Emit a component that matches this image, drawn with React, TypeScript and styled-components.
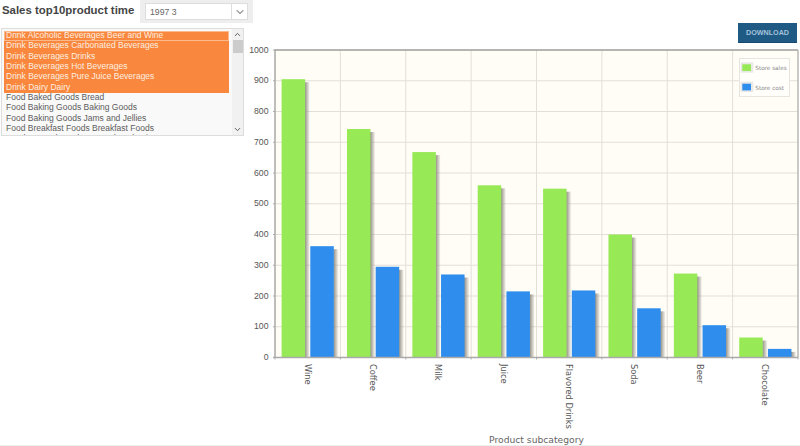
import React from 'react'
import styled, { createGlobalStyle } from 'styled-components'
import { ChevronDown, ChevronUp } from 'lucide-react'

const GlobalStyle = createGlobalStyle`
  html, body {
    margin: 0;
    padding: 0;
    background: #fff;
  }
`

const Page = styled.div`
  width: 800px;
  height: 446px;
  overflow: hidden;
  display: flex;
  box-sizing: border-box;
  border-bottom: 1px solid #eee;
  font-family: 'Liberation Sans', Arial, sans-serif;
`

const Side = styled.div`
  width: 246px;
  flex: none;
  box-sizing: border-box;
  padding-left: 1px;
  display: flex;
  flex-direction: column;
`

const TitleRow = styled.div`
  height: 24px;
  display: flex;
  align-items: flex-start;
  padding-left: 1px;
`

const Title = styled.div`
  width: 138px;
  flex: none;
  font-size: 11.4px;
  font-weight: bold;
  color: #444;
  line-height: 20px;
  white-space: nowrap;
`

const SelectWrap = styled.div`
  width: 113px;
  height: 23px;
  flex: none;
  box-sizing: border-box;
  background: #eee;
  padding: 3px 5px;
`

const SelectBox = styled.div`
  height: 15px;
  background: #fff;
  border: 1px solid #ddd;
  display: flex;
  align-items: center;
  font-size: 8.7px;
  color: #666;
  padding-left: 4px;
`

const SelectText = styled.span`
  flex: 1;
`

const SelectArrow = styled.span`
  width: 15px;
  height: 100%;
  border-left: 1px solid #ddd;
  display: flex;
  align-items: center;
  justify-content: center;
  color: #999;
`

const ListBox = styled.div`
  margin-top: 4px;
  width: 243px;
  height: 108px;
  box-sizing: border-box;
  border: 1px solid #ddd;
  background: #f9f9f9;
  display: flex;
  overflow: hidden;
`

const Options = styled.div`
  flex: 1;
  padding: 2px 0 0 2px;
  overflow: hidden;
`

const Option = styled.div<{ $selected?: boolean; $focused?: boolean }>`
  height: 10.33px;
  line-height: 9px;
  width: 225px;
  font-size: 8.5px;
  padding-left: 2px;
  box-sizing: border-box;
  white-space: nowrap;
  color: ${p => (p.$selected ? '#fdeee0' : '#5c5c5c')};
  background: ${p => (p.$selected ? '#f9873d' : 'transparent')};
  outline: ${p => (p.$focused ? '1px solid #fbb98c' : 'none')};
  outline-offset: -1px;
`

const Scrollbar = styled.div`
  width: 11px;
  flex: none;
  background: #f1f1f1;
  display: flex;
  flex-direction: column;
  align-items: center;
  color: #555;
`

const ScrollButton = styled.div`
  height: 11px;
  flex: none;
  display: flex;
  align-items: center;
  justify-content: center;
`

const ScrollThumb = styled.div`
  width: 10px;
  height: 13px;
  background: #ccc;
`

const ScrollSpace = styled.div`
  flex: 1;
`

const Main = styled.div`
  flex: 1;
  position: relative;
`

const Download = styled.button`
  position: absolute;
  top: 23px;
  right: 3px;
  width: 59px;
  height: 20px;
  border: none;
  border-bottom: 1px solid #174a70;
  padding: 0;
  background: #1f5a85;
  color: #a3c2da;
  font-family: 'Liberation Sans', Arial, sans-serif;
  font-size: 7.2px;
  font-weight: bold;
  cursor: pointer;
`

const items = [
  'Drink Alcoholic Beverages Beer and Wine',
  'Drink Beverages Carbonated Beverages',
  'Drink Beverages Drinks',
  'Drink Beverages Hot Beverages',
  'Drink Beverages Pure Juice Beverages',
  'Drink Dairy Dairy',
  'Food Baked Goods Bread',
  'Food Baking Goods Baking Goods',
  'Food Baking Goods Jams and Jellies',
  'Food Breakfast Foods Breakfast Foods',
  'Food Canned Foods Canned Anchovies',
]

const data = [
  { name: 'Wine', sales: 905, cost: 362 },
  { name: 'Coffee', sales: 743, cost: 295 },
  { name: 'Milk', sales: 668, cost: 270 },
  { name: 'Juice', sales: 560, cost: 215 },
  { name: 'Flavored Drinks', sales: 549, cost: 218 },
  { name: 'Soda', sales: 400, cost: 160 },
  { name: 'Beer', sales: 273, cost: 105 },
  { name: 'Chocolate', sales: 65, cost: 28 },
]

// chart coords are page coords minus the 246px of the side column
const left = 29
const right = 552
const top = 50
const bottom = 357.5
const step = (right - left) / 8
const yOf = (v: number) => bottom - (v / 1000) * (bottom - top)

const Bar = ({ x, value, color }: { x: number; value: number; color: string }) => {
  const y = yOf(value)
  return (
    <>
      <rect x={x + 23} y={y + 3} width={5} height={bottom - y - 3} fill="url(#barShadow)" />
      <rect x={x} y={y} width={23.5} height={bottom - y} fill={color} />
    </>
  )
}

const Chart = () => (
  <svg width={554} height={445} style={{ display: 'block' }}>
    <defs>
      <linearGradient id="barShadow">
        <stop offset="0" stopColor="#8f8b82" />
        <stop offset="1" stopColor="#8f8b82" stopOpacity="0.08" />
      </linearGradient>
    </defs>
    <rect x={left} y={top} width={right - left} height={bottom - top} fill="#fffdf6" />
    {Array.from({ length: 10 }, (_, i) => (
      <line key={i} x1={left} x2={right} y1={yOf((i + 1) * 100)} y2={yOf((i + 1) * 100)} stroke="#e2dfd9" />
    ))}
    {Array.from({ length: 7 }, (_, i) => (
      <line key={i} x1={left + step * (i + 1)} x2={left + step * (i + 1)} y1={top} y2={bottom} stroke="#e2dfd9" />
    ))}
    {data.map((d, i) => (
      <g key={d.name}>
        <Bar x={left + step * i + 6.6} value={d.sales} color="#97e955" />
        <Bar x={left + step * i + 35.3} value={d.cost} color="#2e8ded" />
      </g>
    ))}
    <path d={`M${left} ${bottom}V${top}H${right}`} fill="none" stroke="#a3a3a0" strokeWidth={1.4} />
    <line x1={right} x2={right} y1={top} y2={bottom} stroke="#bdbcb8" strokeWidth={1.6} />
    <line x1={left - 2} x2={right} y1={bottom} y2={bottom} stroke="#aaa" strokeWidth={1.4} />
    {Array.from({ length: 11 }, (_, i) => (
      <g key={i}>
        <line x1={left - 2} x2={left} y1={yOf(i * 100)} y2={yOf(i * 100)} stroke="#aaa" />
        <text x={left - 6.5} y={yOf(i * 100) + 2.6} textAnchor="end" fontSize={8.7} fill="#555" fontFamily="'Liberation Sans', sans-serif">
          {i * 100}
        </text>
      </g>
    ))}
    {Array.from({ length: 9 }, (_, i) => (
      <line key={i} x1={left + step * i} x2={left + step * i} y1={bottom} y2={bottom + 2} stroke="#aaa" />
    ))}
    {data.map((d, i) => (
      <text
        key={d.name}
        transform={`translate(${left + step * i + 29.5} 364) rotate(90)`}
        fontSize={8.3}
        fill="#555"
        fontFamily="'DejaVu Sans', sans-serif"
      >
        {d.name}
      </text>
    ))}
    <text x={290.5} y={443} textAnchor="middle" fontSize={9.2} fill="#666" fontFamily="'DejaVu Sans', sans-serif">
      Product subcategory
    </text>
    <rect x={493.5} y={58.5} width={50} height={38} fill="#fffefb" stroke="#e6e5e0" />
    <rect x={494.7} y={62.3} width={12.6} height={10.4} fill="#e8e8e6" />
    <rect x={496.3} y={64.3} width={8.7} height={6.7} fill="#97e955" />
    <rect x={494.7} y={81.7} width={12.6} height={10.4} fill="#e8e8e6" />
    <rect x={496.3} y={83.7} width={8.7} height={6.7} fill="#2e8ded" />
    <text x={509.3} y={70.3} fontSize={5.7} fill="#888" fontFamily="'DejaVu Sans', sans-serif">Store sales</text>
    <text x={509.3} y={89.7} fontSize={5.7} fill="#888" fontFamily="'DejaVu Sans', sans-serif">Store cost</text>
  </svg>
)

const App = () => (
  <Page>
    <GlobalStyle />
    <Side>
      <TitleRow>
        <Title>Sales top10product time</Title>
        <SelectWrap>
          <SelectBox>
            <SelectText>1997 3</SelectText>
            <SelectArrow>
              <ChevronDown size={12} strokeWidth={2.2} />
            </SelectArrow>
          </SelectBox>
        </SelectWrap>
      </TitleRow>
      <ListBox>
        <Options>
          {items.map((t, i) => (
            <Option key={t} $selected={i < 6} $focused={i === 0}>
              {t}
            </Option>
          ))}
        </Options>
        <Scrollbar>
          <ScrollButton>
            <ChevronUp size={9} strokeWidth={2.5} />
          </ScrollButton>
          <ScrollThumb />
          <ScrollSpace />
          <ScrollButton>
            <ChevronDown size={9} strokeWidth={2.5} />
          </ScrollButton>
        </Scrollbar>
      </ListBox>
    </Side>
    <Main>
      <Download>DOWNLOAD</Download>
      <Chart />
    </Main>
  </Page>
)

export default App
